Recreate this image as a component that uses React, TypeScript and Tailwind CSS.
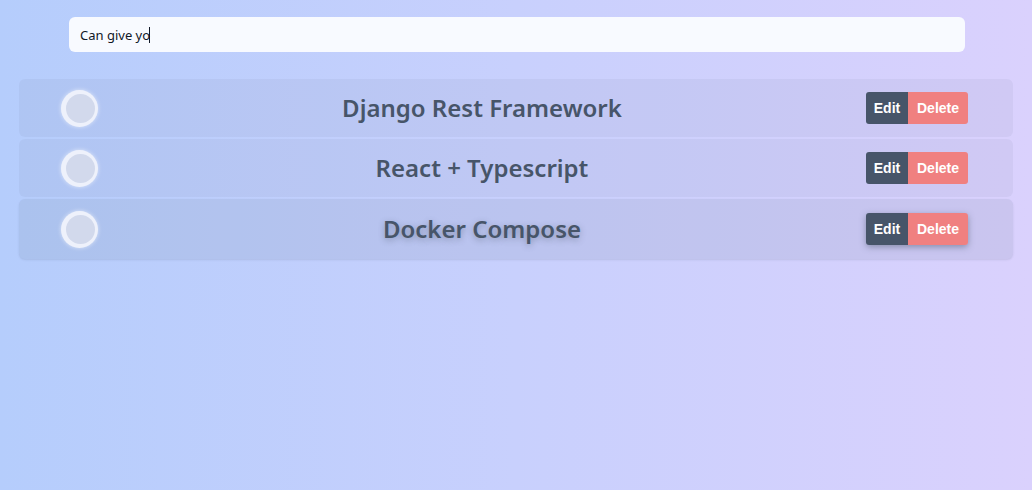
import { useState } from 'react';

interface Todo {
  id: number;
  title: string;
}

const todos: Todo[] = [
  { id: 1, title: 'Django Rest Framework' },
  { id: 2, title: 'React + Typescript' },
  { id: 3, title: 'Docker Compose' },
];

function TodoRow({ todo, active }: { todo: Todo; active?: boolean }) {
  return (
    <div
      className={
        active
          ? 'flex items-center h-[60px] rounded-md bg-[#64748b]/[0.12] shadow-[0_1px_2px_rgba(71,85,105,0.15)]'
          : 'flex items-center h-[58px] rounded-md bg-[#64748b]/[0.08]'
      }
    >
      {/* Check button */}
      <div className="pl-[42px]">
        <div className="w-[37px] h-[37px] rounded-full bg-[#eef1fb] flex items-center justify-end pr-[3px] shadow-[0_0_4px_rgba(255,255,255,0.6)]">
          <div className="w-[29px] h-[29px] rounded-full bg-[#d2d9ec]" />
        </div>
      </div>

      {/* Title */}
      <div className="flex-1 text-center">
        <span
          className={
            active
              ? 'text-[24px] font-semibold text-[#475569] [text-shadow:0_2px_6px_rgba(71,85,105,0.45)]'
              : 'text-[24px] font-semibold text-[#475569]'
          }
          style={{ fontFamily: '"Noto Sans", "Open Sans", sans-serif' }}
        >
          {todo.title}
        </span>
      </div>

      {/* Actions */}
      <div
        className={
          active
            ? 'flex mr-[45px] rounded shadow-[0_2px_6px_rgba(71,85,105,0.5)]'
            : 'flex mr-[45px]'
        }
        style={{ fontFamily: '"Liberation Sans", Arial, sans-serif' }}
      >
        <button className="h-[32px] w-[42px] rounded-l-[3px] bg-[#475569] text-white text-[14px] font-bold">
          Edit
        </button>
        <button className="h-[32px] w-[60px] rounded-r-[3px] bg-[#f08080] text-white text-[14px] font-bold">
          Delete
        </button>
      </div>
    </div>
  );
}

export default function App() {
  const [value, setValue] = useState('Can give yo');

  return (
    <div className="w-[1032px] h-[490px] overflow-hidden bg-gradient-to-r from-[#b5cdfc] via-[#c8d0fd] to-[#dad1fd]">
      <div className="px-[69px] pt-[17px]">
        <div className="relative w-[896px]">
          <input
            value={value}
            onChange={(e) => setValue(e.target.value)}
            className="w-full h-[35px] rounded-md bg-[#f8faff] px-[11px] text-[13px] text-[#111827] outline-none"
            style={{ fontFamily: '"Noto Sans", Inter, sans-serif' }}
          />
          {/* caret */}
          <span className="absolute left-[80px] top-[10px] w-px h-[16px] bg-[#111827]" />
        </div>
      </div>

      <div className="mt-[27px] mx-[19px] flex flex-col gap-[2px]">
        {todos.map((todo) => (
          <TodoRow key={todo.id} todo={todo} active={todo.id === 3} />
        ))}
      </div>
    </div>
  );
}
